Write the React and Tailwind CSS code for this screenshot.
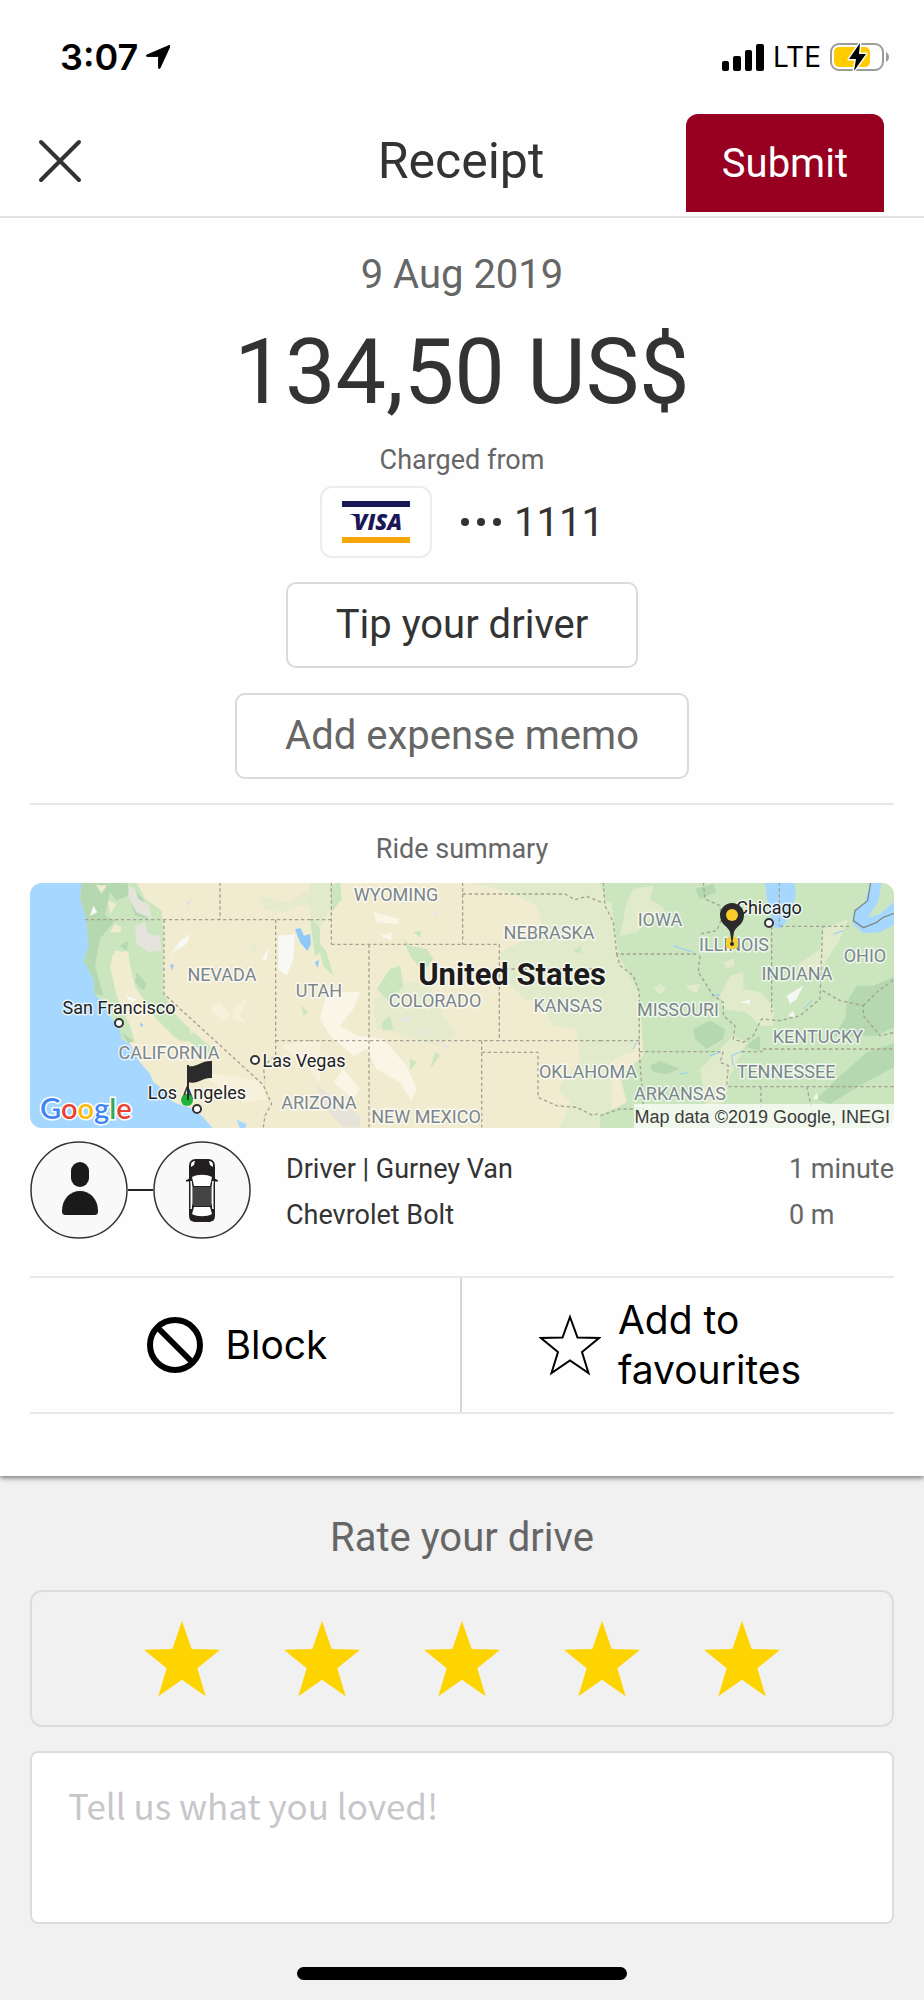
import React, { useState } from 'react';

const STATE_LABELS = [
  { name: 'WYOMING',    x: 366, y: 18 },
  { name: 'NEBRASKA',   x: 519, y: 56 },
  { name: 'IOWA',       x: 630, y: 43 },
  { name: 'ILLINOIS',   x: 704, y: 68 },
  { name: 'INDIANA',    x: 767, y: 97 },
  { name: 'OHIO',       x: 835, y: 79 },
  { name: 'NEVADA',     x: 192, y: 98 },
  { name: 'UTAH',       x: 289, y: 114 },
  { name: 'COLORADO',   x: 405, y: 124 },
  { name: 'KANSAS',     x: 538, y: 129 },
  { name: 'MISSOURI',   x: 648, y: 133 },
  { name: 'KENTUCKY',   x: 788, y: 160 },
  { name: 'TENNESSEE',  x: 756, y: 195 },
  { name: 'CALIFORNIA', x: 139, y: 176 },
  { name: 'OKLAHOMA',   x: 558, y: 195 },
  { name: 'ARKANSAS',   x: 650, y: 217 },
  { name: 'ARIZONA',    x: 289, y: 226 },
  { name: 'NEW MEXICO', x: 396, y: 240 },
];

const CITIES = [
  { name: 'San Francisco', x: 89,  y: 131, dot: [89, 140] },
  { name: 'Las Vegas',     x: 274, y: 184, dot: [225, 177] },
  { name: 'Los Angeles',   x: 167, y: 216, dot: [167, 226] },
  { name: 'Chicago',       x: 739, y: 31,  dot: [739, 40] },
];

const GOOGLE = [
  ['G', '#4285f4'], ['o', '#ea4335'], ['o', '#fbbc05'],
  ['g', '#4285f4'], ['l', '#34a853'], ['e', '#ea4335'],
];

export default function App() {
  const [rating, setRating]   = useState(5);
  const [comment, setComment] = useState('');

  return (
    <div className="min-h-screen flex flex-col bg-[#f1f1f1] font-[Roboto,sans-serif] text-[#333333]">
      <div className="relative bg-[#fefefe] shadow-[0_2px_5px_rgba(0,0,0,0.5)]">
        <StatusBar />
        <Header />

        <main className="px-[30px] pb-[62px]">
          <Charge />

          {/* Ride summary */}
          <section className="border-t-2 border-[#e8e8e8] pt-7">
            <h2 className="text-center text-[27px] leading-8 text-[#666666]">Ride summary</h2>
            <RideMap />
            <RideDetails />
          </section>

          <Actions />
        </main>
      </div>

      {/* Rating */}
      <section className="flex-1 flex flex-col px-[30px] pt-[38px] pb-5">
        <h2 className="text-center text-[40px] leading-[48px] text-[#666666]">Rate your drive</h2>
        <div className="mt-7 h-[137px] flex items-center justify-center gap-16 rounded-xl border-2 border-[#dddddd]">
          {[1, 2, 3, 4, 5].map((n) => (
            <button key={n} type="button" aria-label={`${n} stars`} aria-pressed={n <= rating} onClick={() => setRating(n)}>
              <svg viewBox="0 0 228 228" className={`size-[76px] ${n <= rating ? 'text-[#fdd400]' : 'text-[#d0d0d0]'}`}>
                <path fill="currentColor" d="M114 0L143 84L228 86L160 142L185 226L114 176L43 226L68 142L0 86L85 84Z" />
              </svg>
            </button>
          ))}
        </div>
        <textarea
          aria-label="Comment"
          value={comment}
          onChange={(e) => setComment(e.target.value)}
          placeholder="Tell us what you loved!"
          className="mt-6 h-[173px] w-full resize-none rounded-lg border-2 border-[#dcdcdc] bg-white px-9 py-[26px] font-['Noto_Sans_CJK_SC',sans-serif] text-[35px] leading-[52px] outline-none placeholder-[#c7c7cb]"
        />
        <div className="mx-auto mt-auto h-[13px] w-[330px] rounded-full bg-black" />
      </section>
    </div>
  );
}

function StatusBar() {
  return (
    <div className="h-[114px] flex items-center justify-between pl-[60px] pr-[34px] font-[Inter,sans-serif] text-black">
      <div className="flex items-center gap-2">
        <span className="text-[36px] leading-10 font-semibold">3:07</span>
        <svg viewBox="0 0 24 24" className="size-6">
          <path d="M23 0.6C24 0.3 24.3 0.8 23.8 1.7L14 23C13.6 24 12.6 23.8 12.6 22.8V12.4C12.6 11.7 12.3 11.4 11.6 11.4H1.2C0.2 11.4 0 10.4 1 10Z" stroke="#000" strokeWidth="1" />
        </svg>
      </div>
      <div className="flex items-center gap-[9px]">
        <svg viewBox="0 0 42 27" className="h-[27px] w-[42px]">
          <rect x="0" y="17" width="7" height="10" rx="2" />
          <rect x="11" y="12" width="8" height="15" rx="2" />
          <rect x="23" y="6" width="7" height="21" rx="2" />
          <rect x="34" y="0" width="8" height="27" rx="2" />
        </svg>
        <span className="text-[28px] leading-8">LTE</span>
        <svg viewBox="0 0 60 32" className="h-8 w-[60px]">
          <rect x="1" y="3" width="52" height="26" rx="8" fill="none" stroke="#9b9b9b" strokeWidth="2" />
          <rect x="4" y="6" width="36" height="20" rx="5" fill="#ffcc00" />
          <path d="M56 11C60 13 60 19 56 21Z" fill="#9b9b9b" />
          <path d="M30 2L19 18H26L24 30L36 13H29Z" stroke="#fff" strokeWidth="3" strokeLinejoin="round" />
          <path d="M30 2L19 18H26L24 30L36 13H29Z" />
        </svg>
      </div>
    </div>
  );
}

function Header() {
  return (
    <header className="h-[104px] grid grid-cols-3 items-start border-b-2 border-[#e2e2e2] pl-[38px] pr-10">
      <button type="button" aria-label="Close" className="h-[94px] justify-self-start">
        <svg viewBox="0 0 44 44" className="size-11">
          <path d="M3 3L41 41M41 3L3 41" stroke="#333" strokeWidth="4" strokeLinecap="round" />
        </svg>
      </button>
      <h1 className="text-center text-[50px] leading-[94px]">Receipt</h1>
      <button type="button" className="h-[98px] justify-self-end rounded-t-xl bg-[#980021] px-9 pt-[2px] text-[40px] leading-[48px] text-white">
        Submit
      </button>
    </header>
  );
}

function Charge() {
  return (
    <section className="flex flex-col items-center pt-[33px] pb-6">
      <div className="text-[40px] leading-[48px] text-[#666666]">9 Aug 2019</div>
      <div className="mt-[22px] text-[90px] leading-[104px]">134,50 US$</div>
      <div className="mt-[19px] text-[27px] leading-8 text-[#666666]">Charged from</div>
      <div className="mt-[10px] flex items-center">
        <div className="flex h-[72px] w-[112px] items-center justify-center rounded-xl border-2 border-[#ececec] bg-white">
          <svg viewBox="0 0 68 42" className="h-[42px] w-[68px]">
            <rect width="68" height="6" fill="#1a1759" />
            <rect y="36" width="68" height="6" fill="#f6a609" />
            <path d="M7 13H16L18 20C15 16 12 14 7 13Z" fill="#1a1759" />
            <text x="36" y="29" textAnchor="middle" fill="#1a1759" className="font-['Open_Sans'] text-[22px] font-extrabold italic">VISA</text>
          </svg>
        </div>
        <svg viewBox="0 0 42 10" className="ml-7 h-[10px] w-[42px] fill-[#333333]">
          <circle cx="5" cy="5" r="4" />
          <circle cx="21" cy="5" r="4" />
          <circle cx="37" cy="5" r="4" />
        </svg>
        <span className="ml-3 pt-[2px] text-[40px] leading-[48px]">1111</span>
      </div>
      <button type="button" className="mt-6 h-[86px] rounded-[10px] border-2 border-[#dadada] bg-white px-12 text-[40px] leading-[48px]">
        Tip your driver
      </button>
      <button type="button" className="mt-[25px] h-[86px] rounded-[10px] border-2 border-[#dadada] bg-white px-12 text-[40px] leading-[48px] text-[#666666]">
        Add expense memo
      </button>
    </section>
  );
}

function RideMap() {
  return (
    <svg viewBox="0 0 864 245" className="mt-[18px] w-full rounded-xl bg-[#f1ebd0]">
      {/* Pacific coast and the Great Basin */}
      <g transform="translate(-10 -14) scale(.33333)">
        <path fill="#cbe6bf" d="M185 40H350L375 90L425 125L430 180V370L460 430L510 480L520 520L480 515L420 470L370 390L335 340L325 250L285 245L270 290L290 380L330 470L345 520L310 515L270 440L222 375L190 275Z" />
        <path fill="#b5d8b0" d="M183 40H320L335 75L290 95L270 70L255 140L285 155L240 210L225 290L250 380L222 375L220 330L188 275L205 235L200 155L180 90Z" />
        <path fill="#b5d8b0" d="M340 60L370 90L385 150L345 140L330 90ZM300 230L325 215L320 245ZM350 310L380 345L370 365L345 340ZM305 490L340 515L325 525Z" />
        <path fill="#cbe6bf" d="M225 45L260 55L245 75ZM520 490L580 540L560 560L500 510Z" />
        <path fill="#e6ebcf" d="M720 80L800 100L870 60L900 50V110L840 110L790 130L730 120ZM690 230L720 220L700 250Z" />
        <path fill="#f1ebd0" d="M275 260L320 245L345 350L380 420L450 490L480 530L400 520L350 470L310 400L285 350ZM285 165L305 175L300 190L270 190ZM230 50L260 48L245 70ZM265 95L290 105L270 135Z" />
        <path fill="#e4e4dc" d="M325 50L345 60L355 90L385 105L395 150L350 130L325 85ZM345 170L375 160L385 195L420 200L425 245L385 250L350 225ZM500 100L518 88L505 115Z" />
        <path fill="#f7f0da" d="M570 420L600 400L630 440L610 460ZM640 420L680 390L660 440L680 465L640 450ZM540 610L640 620L720 640L740 690L670 700L600 660ZM780 530L900 510V640L850 580Z" />
        <path fill="#f8f8f5" d="M450 260L480 215L512 195L500 225L465 245ZM775 200L825 195L820 270L800 320L775 300ZM725 270L745 240L740 275ZM210 140L220 110L232 130ZM315 380L350 390L335 400Z" />
        <path fill="#cbe6bf" d="M870 150L900 140V250L885 260ZM845 410L865 430L850 440Z" />
        <path fill="#8ec9fb" d="M825 180L842 178L852 200L870 195L873 225L862 246L840 220ZM885 280L897 272L893 298ZM450 288L460 285L458 305ZM360 460L370 468L362 475Z" />
        <path fill="#a6d8ff" d="M30 40H185L180 90L200 155L205 235L190 275L220 330L222 375L250 400L270 440L300 485L305 510L330 525L360 580L390 615L400 640L440 670L460 700L520 720L550 745L580 780H30Z" />
        <path fill="#a6d8ff" d="M650 752L680 765L675 780H660Z" />
      </g>
      {/* Rockies and the plains */}
      <g transform="translate(280 -14) scale(.33333)">
        <path fill="#e1ebcb" d="M480 40H905V790H745L780 700L745 660L810 570L800 480L730 470L690 400L640 390L590 330L570 250L650 210L700 180L680 110L600 70ZM0 40H60V120L30 180L0 140Z" />
        <path fill="#e6ebcd" d="M190 390L260 350L350 330L400 440L440 500L380 530L290 500L200 480Z" />
        <path fill="#cbe6bf" d="M60 50L90 40L95 90L65 130ZM20 210L50 250L70 320L40 290ZM280 210L300 230L350 240L370 270L340 310L300 260ZM240 300L270 290L280 350L240 400L200 360ZM215 460L240 440L250 480L220 485ZM310 190L335 185L330 205ZM300 570L320 580L300 605ZM375 550L390 560L360 600ZM790 245L815 230L810 255Z" />
        <path fill="#faf6e7" d="M190 130L270 150L260 165L200 160ZM50 370L150 370L130 420L90 470L140 500L220 510L290 590L320 660L305 695L270 640L200 600L170 540L130 560L60 500L30 450ZM100 600L150 660L130 690L70 640ZM210 200L245 190L245 215Z" />
        <path fill="#e4e6ea" d="M270 450L295 440L290 460ZM345 485L360 480L350 505ZM370 130L382 125L375 145ZM400 525L415 535L405 545Z" />
        <path fill="#e6e3da" d="M20 650L90 700L150 740L150 775H100L40 710Z" />
      </g>
      {/* Midwest and the South */}
      <g transform="translate(570 -14) scale(.33333)">
        <path fill="#cbe6bf" d="M0 40H950V790H0V740L80 700L60 620L130 560L118 370L60 290L40 160Z" />
        <path fill="#e1ebcb" d="M0 90L35 100L50 250L118 370L118 500L100 550L60 560L0 600ZM100 60L160 50L150 90L195 120L150 150L110 190L60 200L80 100Z" />
        <path fill="#e1ebcb" d="M390 320L430 310L430 360L480 370L520 410L520 470L480 470L440 430L370 420L360 380ZM400 500L440 520L420 560L390 620L370 700L320 720L300 600L340 560ZM670 180L745 150L720 210L670 290L620 320L590 290L660 240ZM370 280L400 270L405 290L380 300ZM160 360L180 345L200 360L180 375ZM255 350L300 345L290 375Z" />
        <path fill="#b5d8b0" d="M890 320L820 350L770 350L740 400L735 450L700 500L830 500L890 470ZM890 520L800 550L700 640L650 690L690 705L780 650L890 590ZM280 480L330 455L375 480L370 510L320 540L285 510ZM150 590L180 575L240 600L200 615L160 610ZM285 60L340 45L350 70L300 90ZM450 520L480 500L480 545L440 535Z" />
        <path fill="#a6d8ff" d="M495 40H583L587 80L570 140L545 178L525 178L505 120ZM812 40H845L835 95L805 145L840 135L885 95V165L840 190L790 192L757 165L765 125L795 100Z" />
        <path fill="#f5f8f2" d="M560 380L610 350L590 390L570 405ZM565 440L580 425L585 445ZM420 400L450 390L450 405ZM640 690L650 670L655 690Z" />
        <path fill="none" stroke="#8ec9fb" strokeWidth="3" d="M220 230L280 250M400 590L395 560L430 545M330 560L360 550M335 378L360 378M610 420L635 395M700 195L730 185M100 540L110 520M240 615L262 612" />
        <path fill="none" stroke="#7d8a8c" strokeWidth="4" d="M812 40L803 95L765 125L760 155L790 176L830 160L850 145L885 132" />
      </g>
      {/* State borders */}
      <g fill="none" stroke="#a5a193" strokeWidth="4" strokeDasharray="10 8">
        <path transform="translate(-10 -14) scale(.33333)" d="M195 152H870M432 152V375L730 648L755 705L735 740L730 775M600 40V152M767 152V560L730 590L735 640M767 515H870" />
        <path transform="translate(280 -14) scale(.33333)" d="M64 40V226M0 152H64M64 226H568V515M177 226V775M458 40V226M458 75H765L795 92L830 82L875 100M568 300H870M0 515H870M515 515V775M515 550H684V685L740 710L800 715L850 740L870 730" />
        <path transform="translate(570 -14) scale(.33333)" d="M10 40L15 110L40 160L50 255H290M50 255L60 290L100 320L118 370V548L130 720H60L0 740M0 515H118M118 548H370L360 580L385 590L380 650M310 40L315 90L360 110L365 150L350 185L300 195M300 260L295 310L340 380L370 400V440L405 470L400 510L430 520L460 500L485 450L540 455L600 440L660 390L668 172M540 172H750M515 172V430M538 40V170M668 365L720 395L790 410V440L840 500L885 490M425 548H485V540H885M385 653H885M483 653V740M620 653L640 740M790 410L830 370L885 330" />
      </g>

      <g textAnchor="middle" stroke="#fff" strokeOpacity="0.7" strokeWidth="3" strokeLinejoin="round" paintOrder="stroke">
        {STATE_LABELS.map((s) => (
          <text key={s.name} x={s.x} y={s.y} className="fill-[#7b868b] text-[18px]">{s.name}</text>
        ))}
        {CITIES.map((c) => (
          <text key={c.name} x={c.x} y={c.y} className="fill-[#222222] text-[18px]">{c.name}</text>
        ))}
        <text x="482" y="102" className="fill-[#1c1c1c] text-[31px] font-bold">United States</text>
      </g>
      {CITIES.map((c) => (
        <circle key={c.name} cx={c.dot[0]} cy={c.dot[1]} r="4" fill="#fff" stroke="#333" strokeWidth="2" />
      ))}

      {/* Drop-off flag */}
      <circle cx="157" cy="217" r="6" fill="#1eb53a" />
      <path d="M158 217L158 182" stroke="#2b2b2b" strokeWidth="2" />
      <path d="M158 183C166 185 172 177 182 178V195C172 194 168 202 158 199Z" fill="#2b2b2b" />

      {/* Pickup pin */}
      <rect x="696" y="54" width="12" height="12" rx="4" fill="#f5cf3a" />
      <path d="M702 62L700 49C698 43 690 42 690 32A12 12 0 0 1 714 32C714 42 706 43 704 49Z" fill="#2b2b2b" />
      <circle cx="702" cy="32" r="6" fill="#fbcb2a" />
      <circle cx="702" cy="61" r="2" fill="#2b2b2b" />

      <text x="10" y="236" stroke="#fff" strokeWidth="3" paintOrder="stroke" className="font-[Lato] text-[29px] font-semibold">
        {GOOGLE.map(([letter, color], i) => <tspan key={i} fill={color}>{letter}</tspan>)}
      </text>
      <rect x="604" y="221" width="260" height="24" fill="#fff" fillOpacity="0.7" />
      <text x="860" y="240" textAnchor="end" className="fill-[#3c3c3c] font-['Liberation_Sans'] text-[18px]">Map data ©2019 Google, INEGI</text>
    </svg>
  );
}

function RideDetails() {
  return (
    <div className="mt-[13px] flex items-center">
      <div className="flex items-center">
        <svg viewBox="0 0 98 98" className="size-[98px]">
          <circle cx="49" cy="49" r="48" fill="#f9f9f9" stroke="#333" strokeWidth="1.5" />
          <rect x="41" y="21" width="18" height="25" rx="9" fill="#1a1a1a" />
          <path d="M32 70C32 58 40 50 50 50C60 50 68 58 68 70C68 73 67 74 64 74H36C33 74 32 73 32 70Z" fill="#1a1a1a" />
        </svg>
        <div className="h-[2px] w-[25px] bg-[#222222]" />
        <svg viewBox="0 0 98 98" className="size-[98px]">
          <circle cx="49" cy="49" r="48" fill="#f9f9f9" stroke="#333" strokeWidth="1.5" />
          <path d="M43 18H55C60 18 62 21 62 26V74C62 79 60 81 55 81H43C38 81 36 79 36 74V26C36 21 38 18 43 18Z" fill="#231f20" />
          <path d="M36 38L33 40L36 40ZM62 38L65 40L62 40Z" fill="#231f20" stroke="#231f20" />
          <path d="M38 24C38 21 40 20 42 20L41 24L38 26ZM60 24C60 21 58 20 56 20L57 24L60 26Z" fill="#fff" />
          <path d="M39 36C45 33 53 33 59 36L57 45H41Z" fill="#fff" />
          <path d="M41 66H57L59 73C54 76 44 76 39 73Z" fill="#fff" />
          <path d="M38 40L39 46V62L38 68ZM60 40L59 46V62L60 68Z" fill="#fff" stroke="#fff" />
          <rect x="40" y="46" width="18" height="19" rx="1" fill="#444" />
        </svg>
      </div>
      <div className="ml-[35px] flex-1 pt-1 text-[27px] leading-[46px]">
        <div>Driver | Gurney Van</div>
        <div>Chevrolet Bolt</div>
      </div>
      <div className="pt-1 text-[27px] leading-[46px] text-[#666666]">
        <div>1 minute</div>
        <div>0 m</div>
      </div>
    </div>
  );
}

function Actions() {
  return (
    <div className="mt-[37px] grid h-[138px] grid-cols-2 border-y-2 border-[#e8e8e8] font-[Inter,sans-serif] text-[39px] leading-[50px] text-black">
      <button type="button" className="flex items-center justify-center gap-[21px] border-r-2 border-[#d6d6d6] pr-4">
        <svg viewBox="0 0 58 58" className="size-[58px]">
          <circle cx="29" cy="29" r="25" fill="none" stroke="#000" strokeWidth="6" />
          <path d="M12 12L46 46" stroke="#000" strokeWidth="6" />
        </svg>
        Block
      </button>
      <button type="button" className="flex items-center justify-center gap-[17px] pr-4 text-left">
        <svg viewBox="0 0 62 62" className="size-[62px] shrink-0">
          <path d="M31 3L38.500 23.500L60 24L43 38L49.500 59L31 46.500L12.500 59L19 38L2 24L23.500 23.500Z" fill="none" stroke="#000" strokeWidth="2" />
        </svg>
        <span>Add to<br />favourites</span>
      </button>
    </div>
  );
}
